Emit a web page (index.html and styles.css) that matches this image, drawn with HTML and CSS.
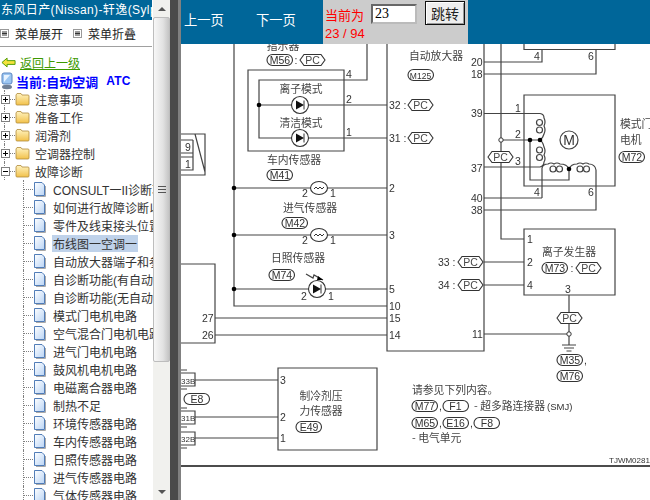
FILE: index.html
```html
<!DOCTYPE html>
<html lang="zh">
<head>
<meta charset="utf-8">
<title>布线图</title>
<link rel="stylesheet" href="styles.css">
</head>
<body>
<svg class="defs" width="0" height="0" aria-hidden="true">
  <defs>
    <linearGradient id="fg" x1="0" y1="0" x2="0" y2="1"><stop offset="0" stop-color="#fff3c0"/><stop offset="1" stop-color="#f2c14a"/></linearGradient>
    <linearGradient id="dg" x1="0" y1="0" x2="1" y2="1"><stop offset="0" stop-color="#fff"/><stop offset="1" stop-color="#b9d4f5"/></linearGradient>
    <symbol id="folder" viewBox="0 0 15 14">
      <path d="M1 3 L2 1.5 H6 L7 3 H13 Q14 3 14 4 V12 Q14 13 13 13 H2 Q1 13 1 12 Z" fill="url(#fg)" stroke="#b08a3a" stroke-width=".8"/>
    </symbol>
    <symbol id="doc" viewBox="0 0 13 15">
      <path d="M1.5 .5 H9 L11.5 3 V13.5 H1.5 Z" fill="url(#dg)" stroke="#3f6fb0" stroke-width=".9"/>
      <path d="M12.5 4 V14.5 H3" fill="none" stroke="#a9a9a9"/>
    </symbol>
    <symbol id="mini" viewBox="0 0 9 9">
      <rect x=".5" y=".5" width="8" height="8" fill="#fff" stroke="#999"/>
      <path d="M2 3H7M2 4.5H7M2 6H7" stroke="#333"/>
    </symbol>
    <symbol id="plus" viewBox="0 0 9 9">
      <rect x=".5" y=".5" width="8" height="8" fill="#fff" stroke="#808080"/>
      <path d="M2 4.5H7M4.5 2V7" stroke="#000"/>
    </symbol>
    <symbol id="minus" viewBox="0 0 9 9">
      <rect x=".5" y=".5" width="8" height="8" fill="#fff" stroke="#808080"/>
      <path d="M2 4.5H7" stroke="#000"/>
    </symbol>
  </defs>
</svg>

<div class="page">
  <aside class="side">
    <div class="side-body">
      <div class="side-title">东风日产(Nissan)-轩逸(Sylphy)</div>
      <div class="menu-row">
        <span class="menu-item"><svg class="mini"><use href="#mini"/></svg>菜单展开</span>
        <span class="menu-item"><svg class="mini"><use href="#mini"/></svg>菜单折叠</span>
      </div>
      <div class="back-row">
        <svg class="back-icon" viewBox="0 0 16 11"><path d="M1 5.500 L6.500 .8 V3.500 H15 V7.500 H6.500 V10.200 Z" fill="#f5e23c" stroke="#4b9a00"/></svg>
        <a class="back-link">返回上一级</a>
      </div>
      <div class="current-row">
        <svg class="pc-icon" viewBox="0 0 14 18"><rect x="2" y="1" width="10" height="11" rx="2" fill="#9cc6f2" stroke="#5a86c0"/><path d="M4 3 L10 3 L4 10 Z" fill="#e8f3ff"/><ellipse cx="7" cy="15" rx="5" ry="2.200" fill="#6f7f95"/></svg>
        <strong class="current-text">当前:自动空调</strong><strong class="current-code">ATC</strong>
      </div>
      <ul class="tree">
        <li class="node"><svg class="box"><use href="#plus"/></svg><i class="dash"></i><svg class="folder"><use href="#folder"/></svg><span>注意事项</span></li>
        <li class="node"><svg class="box"><use href="#plus"/></svg><i class="dash"></i><svg class="folder"><use href="#folder"/></svg><span>准备工作</span></li>
        <li class="node"><svg class="box"><use href="#plus"/></svg><i class="dash"></i><svg class="folder"><use href="#folder"/></svg><span>润滑剂</span></li>
        <li class="node"><svg class="box"><use href="#plus"/></svg><i class="dash"></i><svg class="folder"><use href="#folder"/></svg><span>空调器控制</span></li>
        <li class="node"><svg class="box"><use href="#minus"/></svg><i class="dash"></i><svg class="folder"><use href="#folder"/></svg><span>故障诊断</span></li>
        <li class="leaf"><i class="dash"></i><svg class="doc"><use href="#doc"/></svg><span>CONSULT一II诊断功能</span></li>
        <li class="leaf"><i class="dash"></i><svg class="doc"><use href="#doc"/></svg><span>如何进行故障诊断以便</span></li>
        <li class="leaf"><i class="dash"></i><svg class="doc"><use href="#doc"/></svg><span>零件及线束接头位置图</span></li>
        <li class="leaf"><i class="dash"></i><svg class="doc"><use href="#doc"/></svg><span class="selected">布线图一空调一</span></li>
        <li class="leaf"><i class="dash"></i><svg class="doc"><use href="#doc"/></svg><span>自动放大器端子和参考</span></li>
        <li class="leaf"><i class="dash"></i><svg class="doc"><use href="#doc"/></svg><span>自诊断功能(有自动空调)</span></li>
        <li class="leaf"><i class="dash"></i><svg class="doc"><use href="#doc"/></svg><span>自诊断功能(无自动空调)</span></li>
        <li class="leaf"><i class="dash"></i><svg class="doc"><use href="#doc"/></svg><span>模式门电机电路</span></li>
        <li class="leaf"><i class="dash"></i><svg class="doc"><use href="#doc"/></svg><span>空气混合门电机电路</span></li>
        <li class="leaf"><i class="dash"></i><svg class="doc"><use href="#doc"/></svg><span>进气门电机电路</span></li>
        <li class="leaf"><i class="dash"></i><svg class="doc"><use href="#doc"/></svg><span>鼓风机电机电路</span></li>
        <li class="leaf"><i class="dash"></i><svg class="doc"><use href="#doc"/></svg><span>电磁离合器电路</span></li>
        <li class="leaf"><i class="dash"></i><svg class="doc"><use href="#doc"/></svg><span>制热不足</span></li>
        <li class="leaf"><i class="dash"></i><svg class="doc"><use href="#doc"/></svg><span>环境传感器电路</span></li>
        <li class="leaf"><i class="dash"></i><svg class="doc"><use href="#doc"/></svg><span>车内传感器电路</span></li>
        <li class="leaf"><i class="dash"></i><svg class="doc"><use href="#doc"/></svg><span>日照传感器电路</span></li>
        <li class="leaf"><i class="dash"></i><svg class="doc"><use href="#doc"/></svg><span>进气传感器电路</span></li>
        <li class="leaf"><i class="dash"></i><svg class="doc"><use href="#doc"/></svg><span>气体传感器电路</span></li>
      </ul>
    </div>
    <div class="scrollbar">
      <div class="sb-btn"><i class="arrow-up"></i></div>
      <div class="sb-thumb"><i class="grip"></i></div>
      <div class="sb-track"></div>
      <div class="sb-btn"><i class="arrow-down"></i></div>
    </div>
  </aside>
  <div class="splitter"></div>
  <main class="content">
    <header class="toolbar">
      <div class="pager"><a>上一页</a><a>下一页</a></div>
      <form class="jump">
        <div class="pos"><span>当前为</span><span>23 / 94</span></div>
        <input class="jump-input" value="23">
        <button class="jump-btn" type="button">跳转</button>
      </form>
      <div class="toolbar-rest"></div>
    </header>
    <div class="sheet">
      <svg class="diagram" viewBox="181 44 469 456" width="469" height="456">
        <defs>
          <g id="hexpc"><path d="M0 0 L4 -5.500 H21 L25 0 L21 5.500 H4 Z" class="sym"/><text x="12.500" y="4" class="tc">PC</text></g>
          <g id="pill"><rect x="0" y="-5.500" width="25.500" height="11" rx="5.500" class="sym"/></g>
          <g id="diode"><circle r="8.500" class="sym"/><path d="M-4 -4.500 L4 0 L-4 4.500Z" class="solid"/><path d="M4 -4.500 V4.500" class="wire"/></g>
          <g id="therm"><ellipse rx="8.500" ry="6.500" class="sym"/><path d="M-5 1 L-3 -1 L-1 1 L1 -1 L3 1 L5 -1" class="wire"/></g>
        </defs>
        <g class="wires">
          <path d="M234 44 V306 H387"/>
          <path d="M387 44 V351 H484 V44"/>
          <path d="M248 70 H344 V151 H248 Z"/>
          <path d="M259 105 V80 H367 V44"/>
          <path d="M259 105 V138 H387"/>
          <path d="M259 105 H387"/>
          <path d="M234 188 H387 M234 235 H387 M234 289 H387"/>
          <path d="M181 264 H215 V343 H181 M215 318 H387 M215 335 H387"/>
          <path d="M181 134 H205 V175 H181 M181 153 H193 M181 157 H193 M193 140 H181 M193 140 V170 H181 M195 134 L205 172"/>
          <path d="M524 44 V49.500 H615 V44"/>
          <path d="M542 49.500 V62 H484 M596 49.500 V74 H484"/>
          <path d="M501 44 V239 H524"/>
          <path d="M524 95 H615 V186 H524 Z"/>
          <path d="M484 113.500 H540 Q544 114 544 118 Q546 122 544 126 Q546 130 544 134 Q543 138 540 140 Q543 142 544 147 Q546 151 544 155 Q546 159 544 162 Q544 166 540 167 H484"/>
          <path d="M501 140 H540 M530 140 V180 H569 V169"/>
          <path d="M542 198 V168 Q543 164 548 164 Q551 162 554 164 Q557 162 560 164 Q567 164 569 169 Q571 164 577 164 Q580 162 583 164 Q586 162 589 164 Q595 164 596 170 V210 H484 M542 198 H484"/>
          <circle cx="539.500" cy="122.500" r="3"/><circle cx="539.500" cy="130" r="3"/><circle cx="539.500" cy="150" r="3"/><circle cx="539.500" cy="157.500" r="3"/>
          <circle cx="553" cy="169" r="3"/><circle cx="559.500" cy="169" r="3"/><circle cx="580" cy="169" r="3"/><circle cx="586.500" cy="169" r="3"/>
          <circle cx="569" cy="140" r="9"/>
          <path d="M524 229 H615 V295 H524 Z"/>
          <path d="M484 262 H524 M484 285 H524"/>
          <path d="M569 295 V345 M484 334 H569"/>
          <path d="M562 345 H576 M564 348 H574 M566.500 351 H571.500"/>
          <path d="M278 368 H377 V450 H278 Z"/>
          <path d="M195 380 H278 M195 417 H278 M195 438 H278"/>
          <path d="M181 373 H195 V386 H181 M181 411 H195 V424 H181 M181 432 H195 V445 H181 M181 370 H187 M181 389 H187 M181 408 H187 M181 427 H187 M181 448 H187"/>
          <path d="M306 274 L313 278 L314 275 L323 280"/>
        </g>
        <g class="solids">
          <circle cx="259" cy="105" r="2.300"/><circle cx="234" cy="188" r="2.300"/><circle cx="234" cy="235" r="2.300"/><circle cx="234" cy="289" r="2.300"/>
          <circle cx="530" cy="140" r="2.300"/><circle cx="540" cy="140" r="2.300"/><circle cx="569" cy="169" r="2.300"/>
          <path d="M318 276 L323 280 L317 280Z"/>
        </g>
        <circle cx="501" cy="140" r="2.200" class="open"/>
        <circle cx="569" cy="334" r="2.200" class="open"/>
        <use href="#diode" x="300" y="105"/><use href="#diode" x="300" y="138"/><use href="#diode" x="317" y="289"/>
        <use href="#therm" x="319" y="188"/><use href="#therm" x="319" y="235"/>

        <g class="cn">
          <text x="283" y="50" class="tm">指示器</text>
          <text x="301" y="93" class="tm">离子模式</text>
          <text x="301" y="127" class="tm">清洁模式</text>
          <text x="294" y="164" class="tm">车内传感器</text>
          <text x="310" y="212" class="tm">进气传感器</text>
          <text x="298" y="262" class="tm">日照传感器</text>
          <text x="436" y="60" class="tm">自动放大器</text>
          <text x="620" y="128">模式门</text>
          <text x="620" y="144">电机</text>
          <text x="569" y="256" class="tm">离子发生器</text>
          <text x="321" y="400" class="tm">制冷剂压</text>
          <text x="321" y="415" class="tm">力传感器</text>
          <text x="412" y="394">请参见下列内容。</text>
          <text x="474" y="410">- 超多路连接器</text>
          <text x="412" y="442">- 电气单元</text>
        </g>

        <g class="pills">
          <use href="#pill" x="267" y="60"/><use href="#pill" x="408" y="75"/><use href="#pill" x="267" y="175"/><use href="#pill" x="282" y="223"/><use href="#pill" x="269" y="275"/>
          <use href="#pill" x="619" y="157"/><use href="#pill" x="542" y="268"/><use href="#pill" x="184" y="399"/><use href="#pill" x="296" y="427"/>
          <use href="#pill" x="557" y="360"/><use href="#pill" x="557" y="376"/><use href="#pill" x="412" y="406"/><use href="#pill" x="443" y="406"/>
          <use href="#pill" x="412" y="423"/><use href="#pill" x="443" y="423"/><use href="#pill" x="474" y="423"/>
        </g>
        <use href="#hexpc" x="300" y="60"/><use href="#hexpc" x="408" y="105"/><use href="#hexpc" x="408" y="138"/><use href="#hexpc" x="488" y="157"/>
        <use href="#hexpc" x="458" y="262"/><use href="#hexpc" x="458" y="285"/><use href="#hexpc" x="576" y="268"/><use href="#hexpc" x="557" y="318"/>

        <g class="labels">
          <text x="280" y="64" class="tc">M56</text><text x="296" y="64" class="tc">:</text>
          <text x="420.500" y="78.500" class="tc sm">M125</text>
          <text x="280" y="179" class="tc">M41</text><text x="295" y="227" class="tc">M42</text><text x="282" y="279" class="tc">M74</text>
          <text x="632" y="161" class="tc">M72</text><text x="555" y="272" class="tc">M73</text><text x="572" y="272" class="tc">:</text>
          <text x="197" y="403" class="tc">E8</text><text x="309" y="431" class="tc">E49</text>
          <text x="570" y="364" class="tc">M35</text><text x="584" y="364">,</text><text x="570" y="380" class="tc">M76</text>
          <text x="425" y="410" class="tc">M77</text><text x="439" y="410">,</text><text x="455.500" y="410" class="tc">F1</text>
          <text x="425" y="427" class="tc">M65</text><text x="439" y="427">,</text><text x="455.500" y="427" class="tc">E16</text><text x="470" y="427">,</text><text x="487" y="427" class="tc">F8</text>
          <text x="547" y="410" class="small">(SMJ)</text>
          <text x="389" y="109">32 :</text><text x="389" y="142">31 :</text>
          <text x="438" y="266">33 :</text><text x="438" y="289">34 :</text>
          <text x="346" y="78">4</text><text x="346" y="103">2</text><text x="346" y="136">1</text>
          <text x="389" y="192">2</text><text x="389" y="239">3</text><text x="389" y="293">5</text>
          <text x="389" y="310">10</text><text x="389" y="322">15</text><text x="389" y="339">14</text>
          <text x="202" y="322">27</text><text x="202" y="339">26</text>
          <text x="302" y="197">2</text><text x="330" y="197">1</text><text x="302" y="244">2</text><text x="330" y="244">1</text>
          <text x="301" y="300">2</text><text x="328" y="300">1</text>
          <text x="185" y="151">9</text><text x="185" y="168">1</text>
          <text x="471" y="66">20</text><text x="471" y="78">18</text><text x="471" y="117">39</text><text x="471" y="172">37</text>
          <text x="471" y="202">40</text><text x="471" y="214">38</text><text x="472" y="338">11</text>
          <text x="534" y="60">4</text><text x="588" y="60">6</text><text x="534" y="196">4</text><text x="588" y="196">6</text>
          <text x="515" y="112">1</text><text x="515" y="138">2</text><text x="515" y="165">3</text>
          <text x="527" y="243">1</text><text x="527" y="266">2</text><text x="527" y="289">4</text><text x="565" y="293">3</text>
          <text x="280" y="384">3</text><text x="280" y="421">2</text><text x="280" y="442">1</text>
          <text x="569" y="145" class="big tc">M</text>
          <text x="181" y="384" class="tiny">33B</text><text x="181" y="421" class="tiny">31B</text><text x="181" y="442" class="tiny">32B</text>
          <text x="609" y="463" class="tiny">TJWM0281I</text>
        </g>
        <path d="M181 466 H650" class="rule"/>
      </svg>
    </div>
  </main>
</div>
</body>
</html>
```

FILE: styles.css
```css
* { box-sizing: border-box; }
html, body { margin: 0; height: 100%; overflow: hidden; background: #fff; }
.defs { position: absolute; }
.page { display: flex; width: 650px; height: 500px; font-family: "Liberation Sans", "Noto Sans CJK SC", sans-serif; }

.side { width: 170px; height: 500px; display: flex; flex: none; background: #fff; }
.side-body { width: 153px; overflow: hidden; flex: none; }
.side-title { width: 152px; height: 20px; background: #006699; color: #fff; font-size: 12px; line-height: 20px; letter-spacing: .4px; padding-left: 1px; white-space: nowrap; overflow: hidden; }
.menu-row { height: 27px; display: flex; gap: 10px; align-items: center; border-bottom: 1px solid #a0a0a0; width: 152px; font-size: 12px; color: #222; margin-bottom: 6px; }
.menu-item { display: flex; align-items: center; gap: 6px; }
.mini { width: 9px; height: 9px; }
.back-row { display: flex; align-items: center; height: 18px; gap: 4px; padding-left: 1px; }
.back-icon { width: 15px; height: 11px; }
.back-link { color: #3d9900; font-size: 12px; text-decoration: underline; }
.current-row { display: flex; align-items: center; height: 20px; color: #0000ff; font-size: 13px; white-space: nowrap; }
.pc-icon { width: 14px; height: 18px; margin-right: 2px; }
.current-text { font-weight: 700; }
.current-code { font-weight: 700; margin-left: 8px; letter-spacing: .2px; font-size: 12px; }

.tree { list-style: none; margin: -1px 0 0; padding: 0; font-size: 12px; color: #333; white-space: nowrap; }
.node, .leaf { height: 18px; display: flex; align-items: center; position: relative; }
.node { padding-left: 1px; }
.node::before { content: ""; position: absolute; left: 4px; top: 0; bottom: 0; border-left: 1px dotted #808080; }
.node:last-of-type::after { content: ""; position: absolute; left: 23px; top: 13px; bottom: 0; border-left: 1px dotted #808080; }
.box { width: 9px; height: 9px; z-index: 1; flex: none; }
.dash { width: 5px; border-top: 1px dotted #808080; flex: none; }
.folder { width: 15px; height: 14px; margin-right: 4px; flex: none; }
.node span { padding-left: 1px; }
.leaf { padding-left: 23px; }
.leaf::before { content: ""; position: absolute; left: 23px; top: 0; bottom: 0; border-left: 1px dotted #808080; }
.leaf .dash { width: 10px; }
.doc { width: 13px; height: 15px; margin-right: 6px; flex: none; }
.leaf span { padding: 0 1px; }
.selected { background: #bfd2ea; }

.scrollbar { width: 17px; height: 500px; flex: none; display: flex; flex-direction: column; background: #f1f1ee; }
.sb-btn { height: 17px; display: flex; align-items: center; justify-content: center; flex: none; }
.arrow-up, .arrow-down { width: 0; height: 0; border-left: 4px solid transparent; border-right: 4px solid transparent; }
.arrow-up { border-bottom: 4px solid #555; }
.arrow-down { border-top: 4px solid #555; }
.sb-thumb { height: 345px; flex: none; display: flex; align-items: center; justify-content: center; background: linear-gradient(90deg, #f7f7f7, #e2e2e2 60%, #c4c4c4); border: 1px solid #bdbdbd; border-radius: 2px; }
.grip { width: 8px; height: 7px; border-top: 1px solid #555; border-bottom: 1px solid #555; background: linear-gradient(#555, #555) center / 100% 1px no-repeat; }
.sb-track { flex: 1; }

.splitter { width: 8px; flex: none; background: #4a4a4a; }
.content { flex: 1; min-width: 0; display: flex; flex-direction: column; border-left: 3px solid #808080; }
.toolbar { height: 44px; display: flex; flex: none; background: #006699; }
.pager { width: 142px; display: flex; gap: 32px; padding: 13px 0 0 3px; color: #fff; font-size: 13.300px; line-height: 16px; flex: none; }
.jump { width: 145px; height: 44px; background: #cccccc; display: flex; align-items: flex-start; margin: 0; flex: none; }
.pos { width: 48px; padding: 7px 0 0 2px; display: flex; flex-direction: column; color: #ff0000; font-size: 13px; line-height: 18px; white-space: nowrap; }
.jump-input { width: 46px; height: 20px; margin-top: 4px; padding: 0 2px; font: 14px "Liberation Serif", serif; border: 2px inset #bbb; background: #fff; color: #000; }
.jump-btn { width: 40px; height: 24px; margin: 1px 0 0 8px; padding: 0; font: 14px "Noto Sans CJK SC", sans-serif; line-height: 16px; color: #222; background: #eeeeee; border: 1px solid #111; box-shadow: inset 1px 1px 0 #fff, inset -1px -1px 0 #999; }
.toolbar-rest { flex: 1; }

.sheet { flex: 1; overflow: hidden; background: #fff; }
.diagram { display: block; filter: blur(.3px); font-size: 10.500px; fill: #4a4a4a; }
.wires path, .wires circle { fill: none; stroke: #444; stroke-width: 1.200; }
.wire { fill: none; stroke: #333; stroke-width: 1; }
.solids { fill: #000; }
.solid { fill: #111; }
.sym { fill: #fff; stroke: #333; stroke-width: 1.100; }
.open { fill: #fff; stroke: #333; stroke-width: 1; }
.cn { font-family: "Noto Sans CJK SC", sans-serif; font-size: 10.800px; fill: #444; }
.tm, .tc { text-anchor: middle; }
.labels { font-family: "Liberation Sans", sans-serif; font-size: 10.500px; fill: #333; }
.sm { font-size: 8.500px; }
.small { font-size: 9.500px; }
.tiny { font-size: 8px; }
.big { font-size: 14px; }
.rule { stroke: #111; stroke-width: 1.600; fill: none; }
```
